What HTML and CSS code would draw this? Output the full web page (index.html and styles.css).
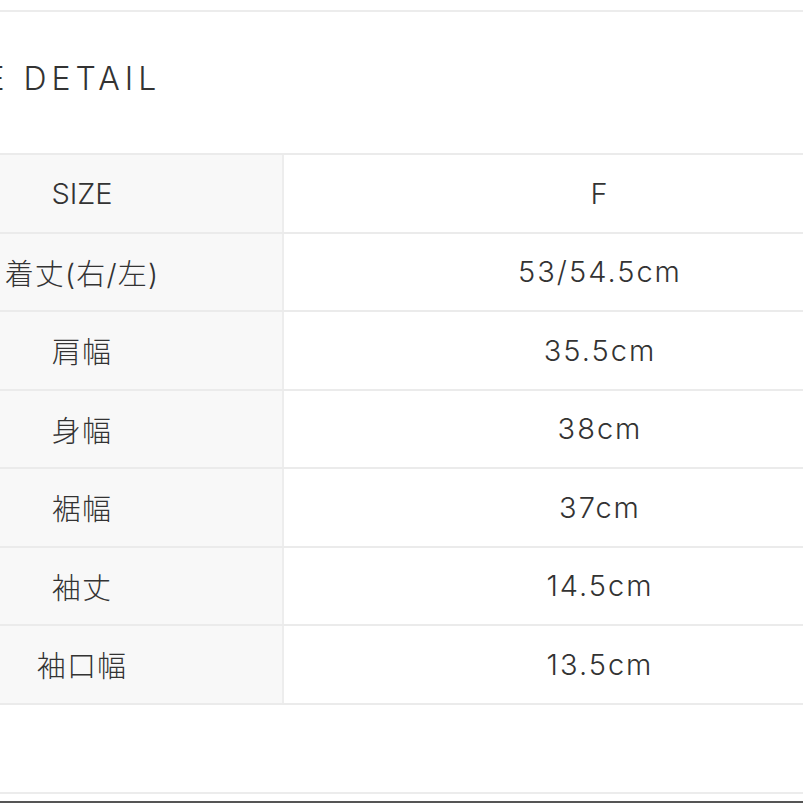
FILE: index.html
```html
<!DOCTYPE html>
<html lang="ja">
<head>
<meta charset="utf-8">
<title>SIZE DETAIL</title>
<link rel="stylesheet" href="styles.css">
</head>
<body>
<div class="page">
  <div class="rule"></div>
  <h2 class="title">SIZE DETAIL</h2>
  <div class="table">
    <div class="row"><div class="th th-latin">SIZE</div><div class="td">F</div></div>
    <div class="row"><div class="th">着丈(右/左)</div><div class="td">53/54.5cm</div></div>
    <div class="row"><div class="th">肩幅</div><div class="td">35.5cm</div></div>
    <div class="row"><div class="th">身幅</div><div class="td">38cm</div></div>
    <div class="row"><div class="th">裾幅</div><div class="td">37cm</div></div>
    <div class="row"><div class="th">袖丈</div><div class="td">14.5cm</div></div>
    <div class="row"><div class="th">袖口幅</div><div class="td">13.5cm</div></div>
  </div>
  <div class="footer-gap"></div>
  <div class="rule"></div>
  <div class="bottom-gap"></div>
  <div class="dark-rule"></div>
</div>
</body>
</html>
```

FILE: styles.css
```css
html, body {
  margin: 0;
  padding: 0;
  background: #fff;
  overflow: hidden;
}
body {
  width: 803px;
  height: 803px;
  font-family: "Inter", "Noto Sans CJK JP", sans-serif;
  color: #333;
}
.page {
  margin-left: -118px;
  width: 1050px;
  padding-top: 10px;
}
.rule {
  height: 2px;
  background: #ececec;
}
.title {
  margin: 0;
  padding: 47px 0 54px 40px;
  font-size: 32px;
  line-height: 40px;
  font-weight: 300;
  letter-spacing: 5px;
  color: #333;
}
.table {
  width: 1034px;
  border-bottom: 2px solid #ebebeb;
}
.row {
  display: grid;
  grid-template-columns: 402px 632px;
  height: 78.5px;
  box-sizing: border-box;
  border-top: 2px solid #ebebeb;
}
.th, .td {
  display: flex;
  align-items: center;
  justify-content: center;
  font-size: 29px;
  font-weight: 300;
  letter-spacing: 2px;
}
.th {
  background: #f8f8f8;
  border-right: 2px solid #ededed;
  letter-spacing: 1.2px;
}
.th-latin {
  letter-spacing: 0;
}
.td {
  background: #fff;
}
.footer-gap {
  height: 87px;
}
.bottom-gap {
  height: 7px;
}
.dark-rule {
  height: 2px;
  background: #555;
}
```
